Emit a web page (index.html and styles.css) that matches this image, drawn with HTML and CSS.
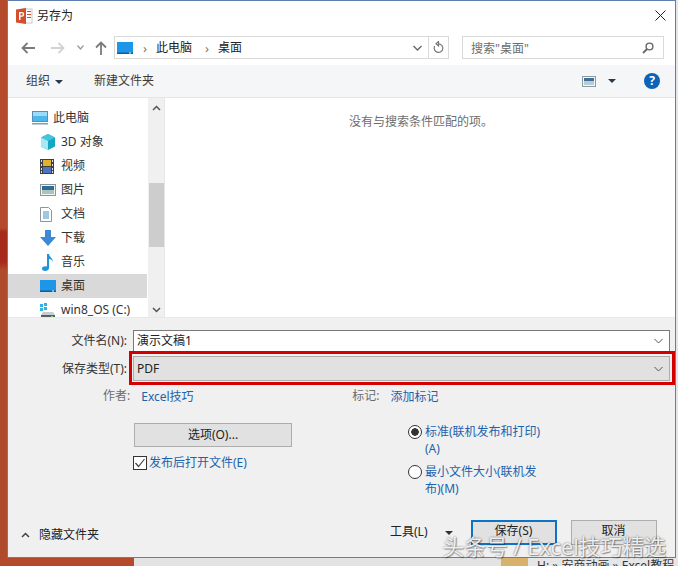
FILE: index.html
```html
<!DOCTYPE html>
<html lang="zh-CN">
<head>
    <meta charset="UTF-8">
    <meta name="viewport" content="width=device-width, initial-scale=1.0">
    <title>另存为</title>
    <link rel="stylesheet" href="styles.css">
</head>
<body>
    <div class="screen">
        <div class="desktop">
            <div class="strip-left"></div>
            <div class="window">
                <div class="titlebar">
                    <svg class="app-icon" width="17" height="16" viewBox="0 0 17 16">
                        <rect x="7" y="1" width="9" height="14" fill="#fff" stroke="#c8c8c8"/>
                        <path d="M11 3h4v1h-4zM11 6h4v1h-4zM11 9h4v1h-4z" fill="#d2502e"/>
                        <path d="M0 1.500 10 0v16L0 14.500z" fill="#d2502e"/>
                        <path d="M3 4h2.800a2.300 2.300 0 0 1 0 4.800H4.500V12H3z M4.500 5.300v2.200h1.200a1.100 1.100 0 0 0 0-2.200z" fill="#fff" fill-rule="evenodd"/>
                    </svg>
                    <span class="title">另存为</span>
                    <svg class="close" width="11" height="11" viewBox="0 0 11 11"><path d="M.5.500l10 10M10.500.500l-10 10" stroke="#222" stroke-width="1" fill="none"/></svg>
                </div>

                <div class="navbar">
                    <svg class="nav-btn back" width="14" height="12" viewBox="0 0 14 12"><path d="M6.500 1 1.500 6l5 5M2 6h12" stroke="#7a7a7a" stroke-width="1.800" fill="none"/></svg>
                    <svg class="nav-btn forward" width="14" height="12" viewBox="0 0 14 12"><path d="M7.500 1l5 5-5 5M12 6H0" stroke="#d2d2d2" stroke-width="1.800" fill="none"/></svg>
                    <svg class="nav-btn recent" width="7" height="5" viewBox="0 0 7 5"><path d="M.5.500 3.500 4l3-3.500" stroke="#9a9a9a" stroke-width="1.300" fill="none"/></svg>
                    <svg class="nav-btn up" width="12" height="14" viewBox="0 0 12 14"><path d="M1 6.500l5-5 5 5M6 2v12" stroke="#7a7a7a" stroke-width="1.800" fill="none"/></svg>
                    <div class="address">
                        <svg class="addr-icon" width="16" height="12" viewBox="0 0 16 12"><rect width="16" height="12" fill="#1e96e8"/><rect y="10.500" width="16" height="1.500" fill="#0b5f9e"/><rect x="12" y="10.500" width="2" height="1" fill="#dff"/></svg>
                        <span class="crumb-sep">›</span>
                        <span class="crumb">此电脑</span>
                        <span class="crumb-sep">›</span>
                        <span class="crumb">桌面</span>
                        <svg class="addr-drop" width="9" height="6" viewBox="0 0 9 6"><path d="M.5 1l4 4 4-4" stroke="#666" stroke-width="1.300" fill="none"/></svg>
                        <span class="addr-refresh">
                            <svg width="11" height="13" viewBox="0 0 11 13"><path d="M5.500 2.800a4.300 4.300 0 1 1-3.800 2.300M5.500 .5v4.500l-2.500-2.200z" stroke="#777" stroke-width="1.200" fill="none"/></svg>
                        </span>
                    </div>
                    <div class="search">
                        <span>搜索"桌面"</span>
                        <svg width="12" height="12" viewBox="0 0 12 12"><circle cx="7.500" cy="4.500" r="3.400" stroke="#666" stroke-width="1.400" fill="none"/><path d="M5 7 1 11" stroke="#666" stroke-width="1.800"/></svg>
                    </div>
                </div>

                <div class="toolbar">
                    <span class="tool organize">组织<i class="caret"></i></span>
                    <span class="tool">新建文件夹</span>
                    <svg class="view-icon" width="14" height="11" viewBox="0 0 14 11"><rect x=".5" y=".5" width="13" height="10" fill="#f4f6f7" stroke="#8c9aa3"/><rect x="2" y="2" width="10" height="3" fill="#3d6f96"/><rect x="2" y="5" width="10" height="4" fill="#b9cdd0"/></svg>
                    <i class="caret view-caret"></i>
                    <span class="help">?</span>
                </div>

                <div class="browser">
                    <div class="tree">
                        <div class="tree-item root">
                            <svg width="16" height="14" viewBox="0 0 16 14"><rect x=".5" y=".5" width="15" height="10" fill="#4cb8ee" stroke="#5a8fb0"/><rect x="1" y="1" width="14" height="4" fill="#9ddcf8"/><rect y="12" width="16" height="1.500" fill="#7f9fb5"/></svg>
                            <span>此电脑</span>
                        </div>
                        <div class="tree-item">
                            <svg width="16" height="16" viewBox="0 0 16 16"><path d="M8 0l7 3.500v9L8 16l-7-3.500v-9z" fill="#15a6c4"/><path d="M8 0l7 3.500L8 7 1 3.500z" fill="#43c6dc"/><path d="M1 3.500 8 7v9l-7-3.500z" fill="#a5eaf2"/></svg>
                            <span>3D 对象</span>
                        </div>
                        <div class="tree-item">
                            <svg width="14" height="15" viewBox="0 0 14 15"><rect width="14" height="15" fill="#3c3f45"/><rect x="3" y="1" width="8" height="6" fill="#e0b32d"/><rect x="3" y="8" width="8" height="6" fill="#4f74b8"/><path d="M1 1h1v2H1zM1 5h1v2H1zM1 9h1v2H1zM1 12h1v2H1zM12 1h1v2h-1zM12 5h1v2h-1zM12 9h1v2h-1zM12 12h1v2h-1z" fill="#dfe3e8"/></svg>
                            <span>视频</span>
                        </div>
                        <div class="tree-item">
                            <svg width="16" height="12" viewBox="0 0 16 12"><rect x=".5" y=".5" width="15" height="11" fill="#f2f4f5" stroke="#8b959c"/><rect x="2" y="2" width="12" height="4" fill="#2f6c92"/><rect x="2" y="6" width="12" height="4" fill="#a9c3bf"/></svg>
                            <span>图片</span>
                        </div>
                        <div class="tree-item">
                            <svg width="12" height="15" viewBox="0 0 12 15"><path d="M.5.500h8l3 3v11H.5z" fill="#fff" stroke="#8b959c"/><path d="M3 5h6M3 7h6M3 9h6M3 11h6" stroke="#3f8fc4"/></svg>
                            <span>文档</span>
                        </div>
                        <div class="tree-item">
                            <svg width="16" height="16" viewBox="0 0 16 16"><path d="M5 0h6v7h5l-8 9-8-9h5z" fill="#3c8ad6"/></svg>
                            <span>下载</span>
                        </div>
                        <div class="tree-item">
                            <svg width="16" height="17" viewBox="0 0 16 17"><path d="M7 0h2c.3 3 4 4 4 8-1-2-2-3-4-3v9c0 2-2 3-4 3s-3-1-3-2.500S4 12 7 12.500z" fill="#1f93e0"/></svg>
                            <span>音乐</span>
                        </div>
                        <div class="tree-item selected">
                            <svg width="16" height="12" viewBox="0 0 16 12"><rect width="16" height="12" fill="#1e96e8"/><rect y="10.500" width="16" height="1.500" fill="#0b5f9e"/><rect x="12" y="10.500" width="2" height="1" fill="#dff"/></svg>
                            <span>桌面</span>
                        </div>
                        <div class="tree-item">
                            <svg width="16" height="15" viewBox="0 0 16 15"><path d="M0 1h3v3H0zM4 0h3v3H4zM0 5h3v3H0zM4 4h3v3H4z" fill="#2fb4e6"/><path d="M3 9h10l2 3v3H1v-3z" fill="#c9cdd0"/><rect x="1" y="12" width="14" height="3" fill="#5a5f63"/><rect x="11" y="13" width="2" height="1" fill="#6fe06f"/></svg>
                            <span>win8_OS (C:)</span>
                        </div>
                    </div>
                    <div class="scrollbar">
                        <svg class="arrow-up" width="9" height="6" viewBox="0 0 9 6"><path d="M1 5l3.500-3.500L8 5" stroke="#555" stroke-width="1.500" fill="none"/></svg>
                        <div class="thumb"></div>
                        <svg class="arrow-down" width="9" height="6" viewBox="0 0 9 6"><path d="M1 1l3.500 3.500L8 1" stroke="#555" stroke-width="1.500" fill="none"/></svg>
                    </div>
                    <div class="files">没有与搜索条件匹配的项。</div>
                </div>

                <div class="panel">
                    <div class="field-row name-row">
                        <label>文件名(N):</label>
                        <div class="field">
                            <span>演示文稿1</span>
                            <svg width="9" height="6" viewBox="0 0 9 6"><path d="M.5 1l4 4 4-4" stroke="#555" fill="none"/></svg>
                        </div>
                    </div>
                    <div class="field-row type-row">
                        <label>保存类型(T):</label>
                        <div class="field select">
                            <span>PDF</span>
                            <svg width="9" height="6" viewBox="0 0 9 6"><path d="M.5 1l4 4 4-4" stroke="#555" fill="none"/></svg>
                            <div class="redbox"></div>
                        </div>
                    </div>
                    <div class="meta-row">
                        <span class="meta-label author">作者:</span>
                        <span class="link author-val">Excel技巧</span>
                        <span class="meta-label tags">标记:</span>
                        <span class="link">添加标记</span>
                    </div>
                    <div class="options">
                        <div class="opt-left">
                            <div class="btn opt-btn">选项(O)...</div>
                            <div class="check">
                                <svg width="14" height="14" viewBox="0 0 14 14"><rect x=".5" y=".5" width="13" height="13" fill="#fff" stroke="#333"/><path d="M2.500 7l3 3.500 6-7.500" stroke="#444" stroke-width="1.200" fill="none"/></svg>
                                <span class="link">发布后打开文件(E)</span>
                            </div>
                        </div>
                        <div class="opt-right">
                            <div class="radio">
                                <span class="dot on"></span>
                                <span class="link">标准(联机发布和打印)<br>(A)</span>
                            </div>
                            <div class="radio">
                                <span class="dot"></span>
                                <span class="link">最小文件大小(联机发<br>布)(M)</span>
                            </div>
                        </div>
                    </div>
                    <div class="footer">
                        <svg class="hide-arrow" width="9" height="6" viewBox="0 0 9 6"><path d="M1 5l3.500-3.500L8 5" stroke="#444" stroke-width="1.500" fill="none"/></svg>
                        <span class="hide-label">隐藏文件夹</span>
                        <span class="tools">工具(L)</span>
                        <i class="caret tools-caret"></i>
                        <div class="btn save">保存(S)</div>
                        <div class="btn cancel">取消</div>
                    </div>
                </div>
            </div>
            <div class="strip-right"></div>
        </div>
        <div class="taskbar">
            <div class="task-orange"></div>
            <div class="task-gray"></div>
            <div class="task-tan"></div>
            <span class="task-path">H: » 安商动画 » Excel教程</span>
        </div>
        <div class="watermark">头条号 / Excel技巧精选</div>
    </div>
</body>
</html>
```

FILE: styles.css
```css
*{
    box-sizing: border-box;
}

body{
    margin: 0;
    background-color: #e6e6e6;
    font-family: "Noto Sans", "Noto Sans CJK SC", sans-serif;
    font-size: 12px;
    color: #222;
}

.screen{
    position: relative;
    width: 678px;
    height: 566px;
    overflow: hidden;
}

.desktop{
    display: flex;
    height: 558px;
}

.strip-left{
    width: 7px;
    background: linear-gradient(#b4492c 0, #b4492c 228px, #a52a1b 232px, #a52a1b 262px, #b04a2d 270px);
}

.strip-right{
    width: 2px;
    background: #e4e6ea;
}

.window{
    width: 669px;
    display: flex;
    flex-direction: column;
    border: 1px solid #5f7fae;
    background-color: #fff;
}

/* title */
.titlebar{
    height: 32px;
    flex: none;
    display: flex;
    align-items: center;
    padding-left: 8px;
    padding-bottom: 3px;
}

.title{
    margin-left: 4px;
    line-height: 16px;
}

.close{
    margin-left: auto;
    margin-right: 9px;
}

/* nav */
.navbar{
    height: 32px;
    flex: none;
    display: flex;
    align-items: center;
    padding-bottom: 3px;
}

.back{ margin-left: 13px; }
.forward{ margin-left: 16px; }
.recent{ margin-left: 12px; }
.up{ margin-left: 11px; }

.address{
    width: 335px;
    height: 23px;
    margin-left: 7px;
    border: 1px solid #d9d9d9;
    display: flex;
    align-items: center;
    padding-left: 2px;
}

.crumb-sep{
    color: #777;
    font-size: 13px;
    margin: 0 9px 0 10px;
    line-height: 16px;
}

.crumb{
    line-height: 16px;
    margin-right: 3px;
}

.addr-drop{
    margin-left: auto;
    margin-right: 6px;
}

.addr-refresh{
    width: 20px;
    height: 21px;
    border-left: 1px solid #d9d9d9;
    display: flex;
    align-items: center;
    justify-content: center;
}

.search{
    width: 202px;
    height: 23px;
    margin-left: 13px;
    border: 1px solid #d9d9d9;
    display: flex;
    align-items: center;
    justify-content: space-between;
    padding: 0 9px 0 8px;
    color: #6d6d6d;
}

/* toolbar */
.toolbar{
    height: 33px;
    flex: none;
    display: flex;
    align-items: center;
    background-color: #f5f6f7;
    border-bottom: 1px solid #e4e5e6;
    color: #3c3c3c;
}

.tool{
    line-height: 16px;
}

.organize{
    margin-left: 18px;
    margin-right: 31px;
}

.caret{
    display: inline-block;
    width: 0;
    height: 0;
    border-left: 4px solid transparent;
    border-right: 4px solid transparent;
    border-top: 4px solid #2b3a4a;
    vertical-align: middle;
}

.organize .caret{
    margin-left: 5px;
}

.view-icon{
    margin-left: 428px;
}

.view-caret{
    margin-left: 12px;
}

.help{
    width: 16px;
    height: 16px;
    margin-left: 28px;
    border-radius: 50%;
    background-color: #0e63b5;
    color: #fff;
    font-weight: 700;
    font-size: 12px;
    line-height: 16px;
    text-align: center;
}

/* browser */
.browser{
    height: 220px;
    flex: none;
    display: flex;
    border-bottom: 1px solid #e8e8e8;
}

.tree{
    width: 139px;
    flex: none;
    padding-top: 8px;
    overflow: hidden;
}

.tree-item{
    height: 24px;
    display: flex;
    align-items: center;
    padding-left: 32px;
    color: #333;
}

.tree-item svg{
    flex: none;
}

.tree-item.root{
    padding-left: 24px;
}

.tree-item span{
    position: absolute;
    margin-left: 21px;
    line-height: 16px;
}

.tree-item.selected{
    background-color: #d9d9d9;
}

.scrollbar{
    width: 17px;
    flex: none;
    background-color: #f0f0f0;
    margin-left: 1px;
    display: flex;
    flex-direction: column;
    align-items: center;
    border-right: 1px solid #e8e8e8;
}

.arrow-up{
    margin-top: 7px;
}

.thumb{
    width: 15px;
    height: 64px;
    margin-top: 72px;
    background-color: #cdcdcd;
}

.arrow-down{
    margin-top: 60px;
}

.files{
    flex: 1;
    text-align: center;
    padding-top: 15px;
    padding-left: 2px;
    color: #6d6d6d;
    line-height: 18px;
}

/* bottom panel */
.panel{
    flex: 1;
    display: flex;
    flex-direction: column;
    background-color: #f0f0f0;
}

.field-row{
    display: flex;
    align-items: center;
}

.field-row label{
    width: 120px;
    text-align: right;
    color: #333;
    line-height: 16px;
    margin-right: 5px;
    padding-right: 1px;
}

.name-row{
    margin-top: 12px;
}

.type-row{
    margin-top: 4px;
}

.field{
    position: relative;
    width: 537px;
    height: 22px;
    background-color: #fff;
    border: 1px solid #7a7a7a;
    display: flex;
    align-items: center;
    justify-content: space-between;
    padding: 0 6px 0 3px;
    line-height: 16px;
}

.select{
    height: 25px;
    background-color: #e1e1e1;
    border-color: #adadad;
}

.redbox{
    position: absolute;
    left: -5px;
    right: -6px;
    top: -6px;
    bottom: -5px;
    border: 3px solid #d40000;
}

.meta-row{
    margin-top: 7px;
    display: flex;
    align-items: center;
    height: 16px;
    line-height: 16px;
}

.meta-label{
    color: #6d6d6d;
}

.author{
    margin-left: 95px;
}

.author-val{
    margin-left: 11px;
    width: 211px;
}

.tags{
    margin-right: 11px;
}

.link{
    color: #1d62ad;
    line-height: 17px;
}

.options{
    display: flex;
    margin-top: 19px;
}

.opt-left{
    width: 274px;
    margin-left: 126px;
}

.btn{
    border: 1px solid #adadad;
    background-color: #e1e1e1;
    display: flex;
    align-items: center;
    justify-content: center;
    line-height: 16px;
}

.opt-btn{
    width: 158px;
    height: 24px;
}

.check{
    display: flex;
    align-items: center;
    margin-top: 7px;
    margin-left: -1px;
    gap: 2px;
}

.radio{
    display: flex;
    align-items: flex-start;
    gap: 3px;
    margin-bottom: 6px;
}

.dot{
    width: 14px;
    height: 14px;
    flex: none;
    margin-top: 2px;
    border: 1px solid #333;
    border-radius: 50%;
    background-color: #fff;
}

.dot.on{
    background: radial-gradient(circle, #333 0, #333 3.500px, #fff 4px);
}

.footer{
    margin-top: auto;
    margin-bottom: 12px;
    display: flex;
    align-items: center;
    height: 25px;
}

.hide-arrow{
    margin-left: 13px;
    margin-top: 4px;
}

.hide-label{
    margin-left: 9px;
    margin-top: 4px;
    line-height: 16px;
    color: #222;
}

.tools{
    margin-left: 291px;
    margin-bottom: 2px;
    line-height: 16px;
}

.tools-caret{
    margin-left: 17px;
    border-top-color: #333;
}

.save{
    width: 86px;
    height: 25px;
    margin-left: 18px;
    padding-bottom: 3px;
    border: 2px solid #0f73c5;
}

.cancel{
    width: 86px;
    height: 25px;
    margin-left: 14px;
    padding-bottom: 3px;
}

/* desktop behind the dialog */
.taskbar{
    height: 8px;
    display: flex;
    overflow: hidden;
}

.task-orange{
    width: 134px;
    background-color: #b4492c;
}

.task-gray{
    width: 367px;
    background-color: #e3e3e3;
}

.task-tan{
    width: 27px;
    background-color: #d8b16c;
}

.task-path{
    margin-left: 9px;
    color: #333;
    white-space: nowrap;
    line-height: 16px;
}

.watermark{
    position: absolute;
    right: 12px;
    bottom: 7px;
    font-size: 21.800px;
    line-height: 24px;
    color: rgba(255, 255, 255, 0.88);
    text-shadow: 0 0 2px rgba(0, 0, 0, 0.55), 1px 1px 1px rgba(0, 0, 0, 0.3);
    white-space: nowrap;
}
```
